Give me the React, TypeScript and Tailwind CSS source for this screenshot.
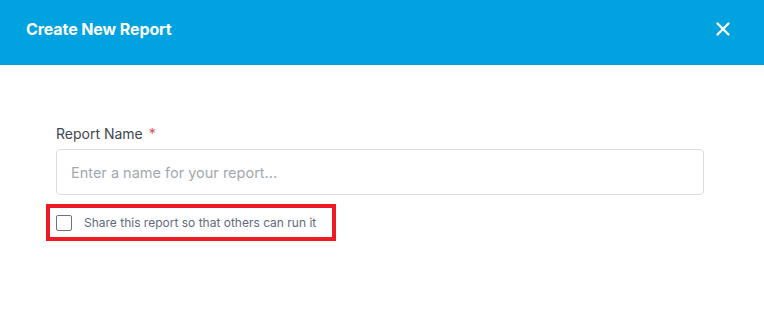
// Create-report modal: blue header bar, report name field and a share checkbox.
import { useState } from "react";

export default function App() {
  const [name, setName] = useState("");
  const [shared, setShared] = useState(false);

  return (
    <div className="w-[764px] h-[329px] bg-white font-['Inter','Noto_Sans',sans-serif] overflow-hidden">
      {/* Header */}
      <div className="h-[65px] bg-[#00a3e0] flex items-center justify-between pl-[26px] pr-[33px] pb-[8px]">
        <h1 className="text-white text-[16px] font-bold tracking-[-0.1px]">Create New Report</h1>
        <button className="text-white" aria-label="Close">
          <svg width="16" height="16" viewBox="0 0 16 16" fill="none">
            <path d="M2.5 2.5l11 11M13.5 2.5l-11 11" stroke="white" strokeWidth="2.4" strokeLinecap="round" />
          </svg>
        </button>
      </div>

      {/* Body */}
      <div className="pt-[59px] pl-[56px] pr-[60px]">
        <label className="block text-[14px] text-[#3f4650] leading-[20px] mb-[5px]">
          Report Name <span className="text-[#d9534f] ml-[2px]">*</span>
        </label>
        <input
          value={name}
          onChange={(e) => setName(e.target.value)}
          placeholder="Enter a name for your report..."
          className="w-full h-[46px] border border-[#dcdcdc] rounded-[4px] px-[14px] text-[14.5px] text-[#374151] placeholder-[#a3a8ae] focus:outline-none"
        />
        <div className="-ml-[10px] mt-[9px] w-[290px] h-[37px] border-[4px] border-[#ed1c24] flex items-center pl-[6px] gap-[12px]">
          <button
            onClick={() => setShared(!shared)}
            className="w-[16px] h-[16px] border border-[#6b7280] rounded-[2px] bg-white"
            aria-label="Share"
          >
            {shared && (
              <svg viewBox="0 0 16 16" className="w-full h-full">
                <path d="M3.5 8l3 3 6-6" stroke="#374151" strokeWidth="2" fill="none" />
              </svg>
            )}
          </button>
          <span className="text-[12px] text-[#5f6b7a]">Share this report so that others can run it</span>
        </div>
      </div>
    </div>
  );
}
